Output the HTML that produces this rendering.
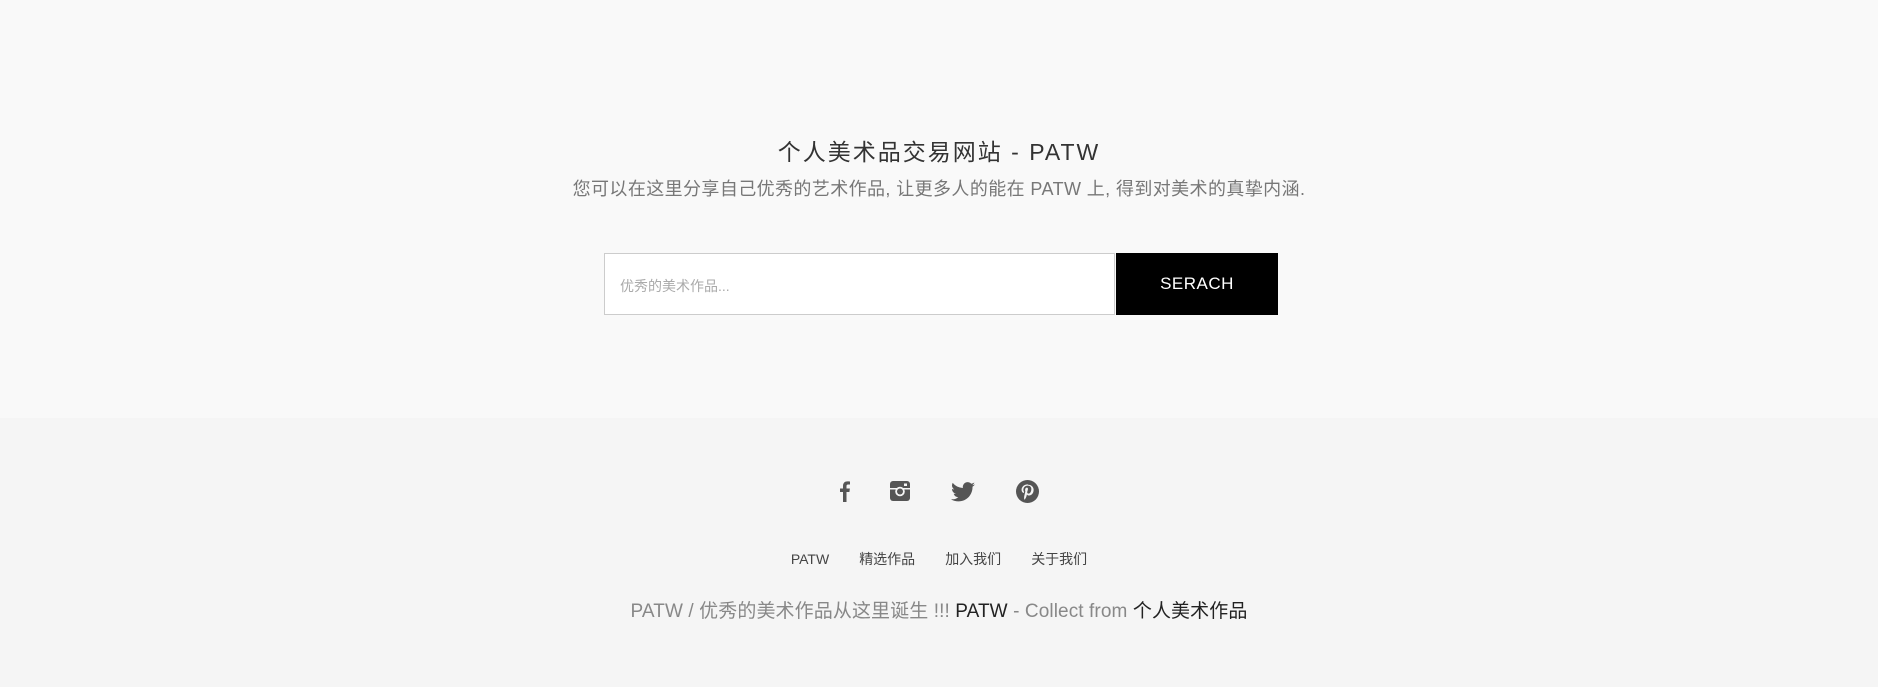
<!DOCTYPE html>
<html><head><meta charset="utf-8"><style>
html,body{margin:0;padding:0}
body{width:1878px;height:687px;background:#f5f5f5;font-family:"Liberation Sans","Noto Sans CJK SC",sans-serif;position:relative;overflow:hidden}
.top{position:absolute;left:0;top:0;width:1878px;height:418px;background:#f9f9f9}
.abs{position:absolute;left:0;width:1878px;text-align:center;white-space:nowrap}
.t1{top:133px;font-size:23px;color:#333;letter-spacing:2px}
.t2{top:175px;font-size:18px;color:#777;letter-spacing:0.4px}
.in{position:absolute;left:604px;top:253px;width:511px;height:62px;background:#fff;border:1px solid #ccc;box-sizing:border-box}
.in span{position:absolute;left:15px;top:22px;font-size:14px;color:#aaa}
.btn{position:absolute;left:1116px;top:253px;width:162px;height:62px;background:#000;color:#fff;font-size:17px;text-align:center;line-height:62px;letter-spacing:0.5px}
.links{top:549px;font-size:14px;color:#444}
.links span{margin:0 15px}
.cp{top:596px;font-size:19px;color:#888;letter-spacing:0.1px}
.cp b{font-weight:normal;color:#222}
svg{position:absolute}
</style></head><body>
<div class="top"></div>
<div class="abs t1">个人美术品交易网站 - PATW</div>
<div class="abs t2">您可以在这里分享自己优秀的艺术作品, 让更多人的能在 PATW 上, 得到对美术的真挚内涵.</div>
<div class="in"><span>优秀的美术作品...</span></div>
<div class="btn">SERACH</div>
<svg style="left:838px;top:480px" width="14" height="22" viewBox="0 0 14 22"><path d="M5 22V12H2V8.5h3V6c0-3 1.8-4.6 4.4-4.6 1.2 0 2.3.1 2.6.1v3h-1.8C8.8 4.5 8.5 5.2 8.5 6.2v2.3h3.4L11.4 12H8.5v10z" fill="#555"/></svg>
<svg style="left:890px;top:481px" width="20" height="20" viewBox="0 0 20 20"><rect width="20" height="20" rx="3" fill="#555"/><rect x="0" y="7" width="20" height="1.5" fill="#f5f5f5"/><circle cx="10" cy="10.5" r="4.8" fill="#f5f5f5"/><circle cx="10" cy="10.5" r="3" fill="#555"/><rect x="14" y="2.5" width="3" height="2.5" fill="#f5f5f5"/></svg>
<svg style="left:951px;top:482px" width="24" height="20" viewBox="0 0 24 20"><path d="M24 2.4c-.9.4-1.8.6-2.8.8 1-.6 1.800-1.6 2.2-2.7-1 .6-2 1-3.1 1.2A4.9 4.9 0 0 0 11.9 6 14 14 0 0 1 1.7.9a4.9 4.9 0 0 0 1.5 6.6c-.8 0-1.6-.3-2.2-.6 0 2.4 1.7 4.4 3.9 4.8-.7.2-1.5.2-2.2.1.6 2 2.4 3.4 4.6 3.4A9.9 9.9 0 0 1 0 17.2 14 14 0 0 0 7.5 19.4c9 0 14-7.5 14-14v-.6c1-.7 1.8-1.6 2.5-2.4z" fill="#555"/></svg>
<svg style="left:1016px;top:480px" width="23" height="23" viewBox="0 0 24 24"><circle cx="12" cy="12" r="12" fill="#555"/><path d="M12.3 4.5c-4.3 0-6.5 3-6.5 5.600 0 1.6.6 2.9 1.900 3.4.2.1.4 0 .5-.2l.2-.7c.1-.2 0-.3-.1-.5-.4-.4-.6-1-.6-1.8 0-2.300 1.700-4.400 4.500-4.400 2.5 0 3.8 1.5 3.8 3.5 0 2.6-1.2 4.8-2.9 4.8-.9 0-1.6-.8-1.4-1.7.3-1.1.8-2.4.8-3.2 0-.7-.4-1.4-1.2-1.4-1 0-1.8 1-1.8 2.4 0 .9.3 1.5.3 1.5l-1.2 5c-.3 1.3-.1 2.8 0 3.6h.6c.5-.7 1.3-2 1.6-3l.6-2.3c.3.6 1.2 1.1 2.2 1.1 2.9 0 4.8-2.6 4.8-6.1 0-2.7-2.3-5.2-5.7-5.2z" fill="#f5f5f5"/></svg>
<div class="abs links"><span>PATW</span><span>精选作品</span><span>加入我们</span><span>关于我们</span></div>
<div class="abs cp">PATW / 优秀的美术作品从这里诞生 !!! <b>PATW</b> - Collect from <b>个人美术作品</b></div>
</body></html>
